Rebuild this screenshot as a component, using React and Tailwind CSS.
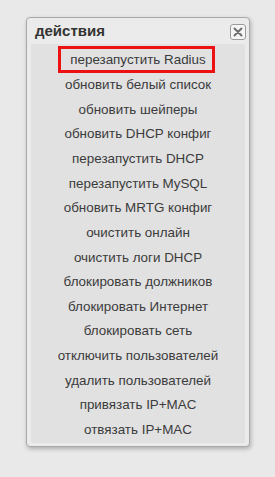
import React from "react";

const items = [
  "перезапустить Radius",
  "обновить белый список",
  "обновить шейперы",
  "обновить DHCP конфиг",
  "перезапустить DHCP",
  "перезапустить MySQL",
  "обновить MRTG конфиг",
  "очистить онлайн",
  "очистить логи DHCP",
  "блокировать должников",
  "блокировать Интернет",
  "блокировать сеть",
  "отключить пользователей",
  "удалить пользователей",
  "привязать IP+MAC",
  "отвязать IP+MAC",
];

export default function App() {
  return (
    <div
      className="min-h-[477px] w-[275px] bg-[#e9e9e9] pt-[17px] pl-[26px]"
      style={{ fontFamily: '"Liberation Sans", Arial, sans-serif' }}
    >
      <div className="w-[224px] rounded-[4px] border border-[#a9a9a9] bg-[#ebebeb] px-[4px] pb-[3px] shadow-[1px_2px_4px_rgba(0,0,0,0.25)]">
        <div className="flex h-[26px] items-center justify-between pl-[4px] pt-[1px]">
          <span className="text-[15px] font-bold text-[#333]">действия</span>
          <button className="mr-[-1px] flex h-[16px] w-[16px] items-center justify-center rounded-[3px] border border-[#9a9a9a] bg-[#f6f6f6]">
            <svg width="10" height="10" viewBox="0 0 10 10">
              <path d="M1.5 1.5 L8.5 8.5 M8.5 1.5 L1.5 8.5" stroke="#6f6f6f" strokeWidth="2" strokeLinecap="round" />
            </svg>
          </button>
        </div>
        <div className="flex flex-col items-center rounded-[2px] bg-[#e1e1e1] pt-[4px]">
          {items.map((t, i) => (
            <div
              key={t}
              className={
                i === 0
                  ? "relative flex h-[24.67px] items-center justify-center text-[13.4px] text-[#3b3b3b]"
                  : "flex h-[24.67px] items-center justify-center text-[13.4px] text-[#3b3b3b]"
              }
            >
              {i === 0 && (
                <span className="absolute left-[-12px] right-[-9px] top-[-2px] bottom-[0px] border-[3px] border-[#ee1111]" />
              )}
              {t}
            </div>
          ))}
        </div>
      </div>
    </div>
  );
}
